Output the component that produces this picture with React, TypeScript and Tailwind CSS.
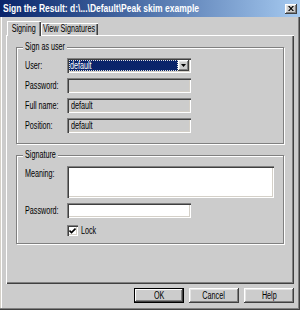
import React from "react";

const sunken =
  "shadow-[inset_1px_1px_0_#808080,inset_2px_2px_0_#404040,inset_-1px_-1px_0_#ffffff,inset_-2px_-2px_0_#d4d0c8]";
const raised =
  "shadow-[inset_-1px_-1px_0_#404040,inset_1px_1px_0_#ffffff,inset_-2px_-2px_0_#808080,inset_2px_2px_0_#e4e4e4]";

function T({ children, center = false }: { children: React.ReactNode; center?: boolean }) {
  return (
    <span
      className={
        "inline-block whitespace-nowrap scale-x-[0.72] leading-[12px] " + (center ? "origin-center" : "origin-left")
      }
    >
      {children}
    </span>
  );
}

function Row({ label, children, className = "" }: { label: string; children: React.ReactNode; className?: string }) {
  return (
    <div className={"flex items-start " + className}>
      <div className="w-[42px] pl-[8px] h-[15px] flex items-center box-content overflow-visible">
        <T>{label}</T>
      </div>
      {children}
    </div>
  );
}

function ReadField({ value = "" }: { value?: string }) {
  return (
    <div className={"w-[124px] h-[15px] bg-[#cccccc] flex items-center pl-[4px] " + sunken}>
      <T>{value}</T>
    </div>
  );
}

function Group({
  title,
  height,
  labelWidth,
  className = "",
  children,
}: {
  title: string;
  height: string;
  labelWidth: string;
  className?: string;
  children: React.ReactNode;
}) {
  return (
    <div
      className={
        "w-[268px] border border-[#808080] shadow-[inset_1px_1px_0_#ffffff,1px_1px_0_#ffffff] flex flex-col " +
        height +
        " " +
        className
      }
    >
      <div className={"-mt-[7px] ml-[6px] self-start pl-[2px] bg-[#cccccc] h-[12px] flex items-center overflow-hidden " + labelWidth}>
        <T>{title}</T>
      </div>
      {children}
    </div>
  );
}

function Button({ label, isDefault = false }: { label: string; isDefault?: boolean }) {
  return (
    <div
      className={
        "w-[50px] h-[15px] flex items-center justify-center " +
        (isDefault
          ? "shadow-[inset_0_0_0_1px_#000000,inset_-2px_-2px_0_#404040,inset_2px_2px_0_#ffffff,inset_-3px_-3px_0_#808080]"
          : raised)
      }
    >
      <T center>{label}</T>
    </div>
  );
}

export default function App() {
  return (
    <div className="w-[300px] h-[310px] bg-[#cccccc] flex flex-col text-[10px] text-black font-['Liberation_Sans',Arial,sans-serif] shadow-[inset_-1px_-1px_0_#404040,inset_-2px_-2px_0_#808080,inset_1px_0_0_#d4d0c8,inset_2px_0_0_#ffffff]">
      {/* Title bar */}
      <div className="h-[17px] flex items-center justify-between pl-[3px] pr-[3px] bg-gradient-to-r from-[#0a246a] to-[#a6caf0]">
        <span className="text-white font-bold text-[10px] leading-[12px] inline-block whitespace-nowrap origin-left scale-x-[0.85]">
          Sign the Result: d:\...\Default\Peak skim example
        </span>
        <div className={"w-[12px] h-[10px] bg-[#cccccc] flex items-center justify-center " + raised}>
          <svg width="6" height="5" viewBox="0 0 6 5">
            <path d="M0 0h1.5L3 1.8 4.5 0H6L3.8 2.5 6 5H4.5L3 3.2 1.5 5H0l2.2-2.5z" fill="#000" />
          </svg>
        </div>
      </div>

      {/* Body */}
      <div className="flex flex-col px-[6px] pt-[4px]">
        {/* Tabs */}
        <div className="flex items-end h-[14px] pl-[1px] relative z-10">
          <div className="h-[15px] w-[34px] -mb-[1px] bg-[#cccccc] flex items-center justify-center shadow-[inset_1px_1px_0_#ffffff,inset_-1px_0_0_#404040,inset_-2px_0_0_#808080]">
            <T center>Signing</T>
          </div>
          <div className="h-[12px] w-[57px] flex items-center justify-center shadow-[inset_1px_1px_0_#ffffff,inset_-1px_0_0_#404040,inset_-2px_0_0_#808080]">
            <T center>View Signatures</T>
          </div>
        </div>

        {/* Panel */}
        <div className="w-[288px] h-[249px] flex flex-col pl-[10px] pt-[12px] shadow-[inset_1px_1px_0_#ffffff,inset_-1px_-1px_0_#404040,inset_-2px_-2px_0_#808080]">
          <Group title="Sign as user" height="h-[97px]" labelWidth="w-[44px]">
            <Row label="User:" className="mt-[5px]">
              <div className={"w-[124px] h-[15px] bg-white flex items-center p-[2px] " + sunken}>
                <div className="flex-1 h-[11px] bg-[#0a246a] text-white flex items-center pl-[1px] outline-dotted outline-1 outline-[#e0e0e0] -outline-offset-1">
                  <T>default</T>
                </div>
                <div className={"w-[11px] h-[11px] bg-[#cccccc] flex items-center justify-center " + raised}>
                  <svg width="5" height="3" viewBox="0 0 5 3">
                    <path d="M0 0h5L2.5 3z" fill="#000" />
                  </svg>
                </div>
              </div>
            </Row>
            <Row label="Password:" className="mt-[5px]">
              <ReadField />
            </Row>
            <Row label="Full name:" className="mt-[5px]">
              <ReadField value="default" />
            </Row>
            <Row label="Position:" className="mt-[5px]">
              <ReadField value="default" />
            </Row>
          </Group>

          <Group title="Signature" height="h-[89px]" labelWidth="w-[35px]" className="mt-[11px]">
            <Row label="Meaning:" className="mt-[5px]">
              <div className={"w-[207px] h-[32px] bg-white " + sunken} />
            </Row>
            <Row label="Password:" className="mt-[5px]">
              <div className={"w-[124px] h-[15px] bg-white " + sunken} />
            </Row>
            <div className="flex items-center mt-[7px] pl-[50px] h-[11px]">
              <div className={"w-[11px] h-[11px] bg-white flex items-center justify-center " + sunken}>
                <svg width="7" height="7" viewBox="0 0 7 7">
                  <path d="M0.5 3.5L2.5 5.5L6.5 1.5" stroke="#000" strokeWidth="1.6" fill="none" />
                </svg>
              </div>
              <span className="ml-[3px]">
                <T>Lock</T>
              </span>
            </div>
          </Group>
        </div>

        {/* Buttons */}
        <div className="flex justify-end gap-[5px] mt-[4px]">
          <Button label="OK" isDefault />
          <Button label="Cancel" />
          <Button label="Help" />
        </div>
      </div>
    </div>
  );
}
